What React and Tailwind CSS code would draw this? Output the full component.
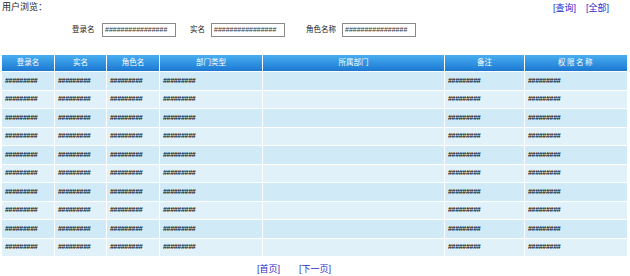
import React from "react";

const cols = ["登录名", "实名", "角色名", "部门类型", "所属部门", "备注", "权限名称"];
const rows = Array.from({ length: 10 });
const cellCols = [true, true, true, true, false, true, true];

export default function App() {
  return (
    <div
      className="w-[630px] h-[276px] bg-white relative overflow-hidden"
      style={{ fontFamily: '"Liberation Sans", "Noto Sans CJK SC", sans-serif' }}
    >
      <div className="flex justify-between items-start h-[18px]">
        <div className="text-[9px] leading-[12px] text-[#222] pl-[2px] pt-[1px]">用户浏览：</div>
        <div className="flex gap-[10px] text-[9px] leading-[11px] text-[#2a2ad0] pr-[21px] pt-[3px]">
          <span>[查询]</span>
          <span>[全部]</span>
        </div>
      </div>
      <div className="flex items-center h-[15px] mt-[4px] text-[7.5px] text-[#222]">
        <span className="ml-[72px] w-[30px]">登录名</span>
        <div className="w-[74px] h-[14px] border border-[#8a8a8a] bg-white text-[7px] leading-[12px] pl-[2px] text-[#333]">################</div>
        <span className="ml-[14px] w-[21px]">实名</span>
        <div className="w-[74px] h-[14px] border border-[#8a8a8a] bg-white text-[7px] leading-[12px] pl-[2px] text-[#333]">################</div>
        <span className="ml-[21px] w-[36px]">角色名称</span>
        <div className="w-[74px] h-[14px] border border-[#8a8a8a] bg-white text-[7px] leading-[12px] pl-[2px] text-[#333]">################</div>
      </div>
      <div className="ml-[2px] mt-[18px] w-[625px] grid grid-cols-[52px_51px_52px_102px_181px_79px_102px] gap-px bg-white">
        {cols.map((c) => (
          <div
            key={c}
            className={
              "h-[16px] bg-gradient-to-b from-[#48aef0] to-[#1b78d2] text-white text-[7.5px] leading-[16px] text-center " +
              (c === "权限名称" ? "tracking-[1.5px]" : "")
            }
          >
            {c}
          </div>
        ))}
        {rows.map((_, r) =>
          cellCols.map((has, ci) => (
            <div
              key={r + "-" + ci}
              className={
                "h-[17.5px] flex items-center pl-[3px] text-[7px] font-bold tracking-[-0.3px] text-[#111] " +
                (r % 2 === 0 ? "bg-[#d0ebf7]" : "bg-[#e0f1f9]")
              }
            >
              {has ? "#########" : ""}
            </div>
          ))
        )}
      </div>
      <div className="flex text-[9px] leading-[11px] text-[#2a2ad0] mt-[8px]">
        <span className="ml-[257px]">[首页]</span>
        <span className="ml-[19px]">[下一页]</span>
      </div>
    </div>
  );
}
